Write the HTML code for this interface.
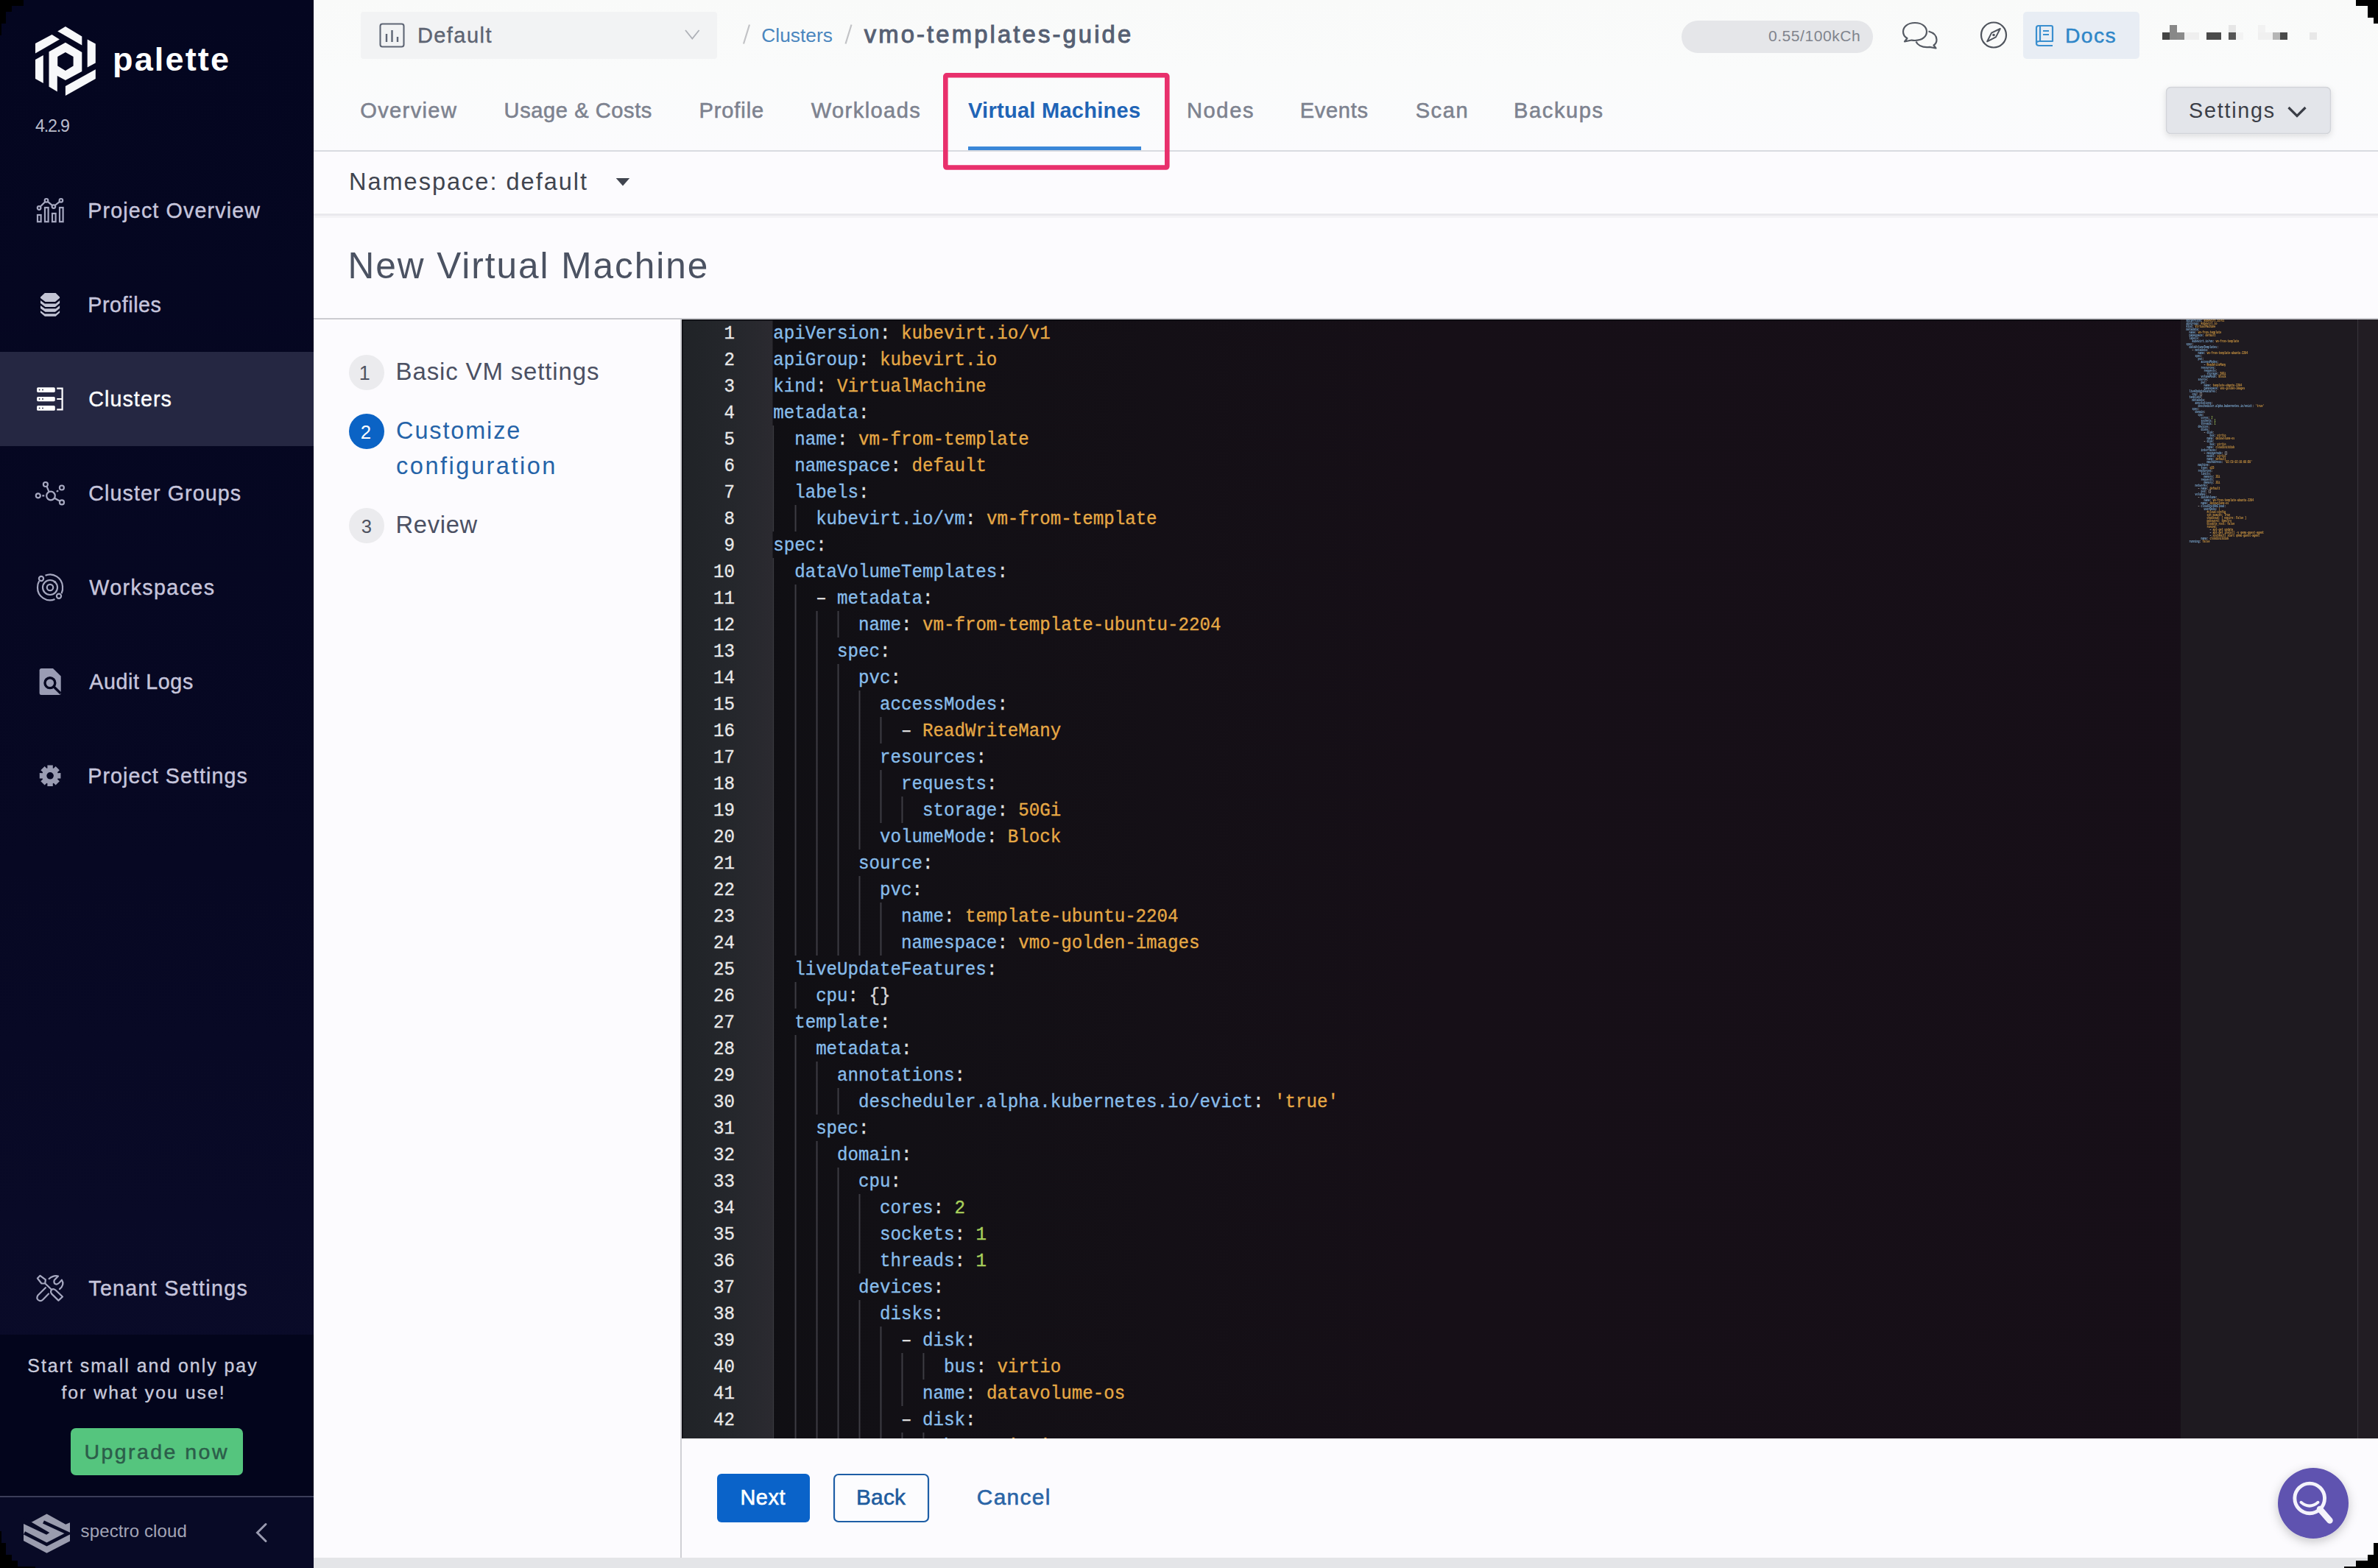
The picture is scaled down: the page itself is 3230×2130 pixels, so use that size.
<!DOCTYPE html>
<html><head><meta charset="utf-8"><title>New Virtual Machine</title>
<style>
html,body{margin:0;padding:0;width:3230px;height:2130px;overflow:hidden;background:#000;}
#page{position:absolute;left:0;top:0;width:3230px;height:2130px;overflow:hidden;}
svg{display:block;}

</style></head>
<body><div id="page">
<svg width="3230" height="2130" viewBox="0 0 3230 2130">
<defs>
<linearGradient id="sbg" x1="0" y1="0" x2="0" y2="1">
 <stop offset="0" stop-color="#040620"/><stop offset="0.55" stop-color="#070823"/><stop offset="1" stop-color="#0b0c2b"/>
</linearGradient>
<linearGradient id="gut" x1="0" y1="0" x2="1" y2="0">
 <stop offset="0" stop-color="#202327"/><stop offset="0.6" stop-color="#25272c"/><stop offset="1" stop-color="#2b2a30"/>
</linearGradient>
<linearGradient id="codebg" x1="0" y1="0" x2="1" y2="0">
 <stop offset="0" stop-color="#0e0e12"/><stop offset="0.12" stop-color="#121015"/><stop offset="0.45" stop-color="#160f17"/><stop offset="1" stop-color="#170f18"/>
</linearGradient>
<linearGradient id="hdr" x1="0" y1="0" x2="0" y2="1"><stop offset="0" stop-color="#f9faf9"/><stop offset="0.45" stop-color="#fafbfb"/><stop offset="1" stop-color="#fbfbfd"/></linearGradient>
<filter id="sh" x="-20%" y="-20%" width="140%" height="160%"><feDropShadow dx="0" dy="3" stdDeviation="4" flood-color="#000" flood-opacity="0.12"/></filter>
<filter id="sh2" x="-30%" y="-30%" width="160%" height="160%"><feDropShadow dx="0" dy="4" stdDeviation="7" flood-color="#000" flood-opacity="0.22"/></filter>
</defs>
<rect x="426" y="0" width="2804" height="2130" fill="#fcfbfe"/>
<rect x="426" y="0" width="2804" height="204" fill="url(#hdr)"/>
<rect x="426" y="204" width="2804" height="2" fill="#d9dbe0"/>
<rect x="426" y="289" width="2804" height="1" fill="#ffffff"/>
<rect x="426" y="290" width="2804" height="3" fill="#eae9ed"/>
<rect x="426" y="293" width="2804" height="3" fill="#f4f3f6"/>
<rect x="426" y="432" width="2804" height="2" fill="#cbcbd0"/>
<rect x="924" y="434" width="2" height="1682" fill="#d0d0d5"/>
<rect x="426" y="2116" width="2804" height="14" fill="#e4e5e8"/>
<rect x="0" y="0" width="426" height="2130" fill="url(#sbg)"/>
<rect x="0" y="478" width="426" height="128" fill="#252742"/>
<rect x="0" y="1813" width="426" height="220" fill="#03051c"/>
<rect x="0" y="2032" width="426" height="2" fill="#3b3d58"/>
<rect x="0" y="2034" width="426" height="96" fill="#080a26"/>
<rect x="96" y="1940" width="234" height="64" rx="7" fill="#55c57e"/>
<g fill="#f7f8fa">
<polygon points="78.2,42.4 88.9,36 111.3,49.4 111.3,61.5"/>
<polygon points="118.7,53.4 129.8,59.5 129.8,85.6 118.7,91.6"/>
<polygon points="88.9,117.1 129.8,94.3 129.8,107 88.9,130.1"/>
<polygon points="48,59.1 70.5,47.1 80.9,53.4 48,72.5"/>
<polygon points="48,80.9 58.8,74.9 58.8,113 48,107"/>
<path fill-rule="evenodd" d="M66.5,70.2 L88.9,57.8 L111.3,70.9 L111.3,97 L88.9,109 L77.8,103 L77.8,124.4 L66.5,117.7 Z M78.2,76.9 L88.9,70.9 L99.6,76.9 L99.6,89.6 L88.9,96 L78.2,89.6 Z"/>
</g>
<g transform="translate(44,260)" fill="none" stroke="#a6a8c0" stroke-width="2.2">
<rect x="7" y="32" width="4.6" height="9.2"/><rect x="17" y="22" width="4.6" height="19.2"/><rect x="27" y="30" width="4.6" height="11.2"/><rect x="37" y="22" width="4.6" height="19.2"/>
<circle cx="9.1" cy="22.5" r="2.3"/><circle cx="19" cy="12.3" r="2.3"/><circle cx="28.9" cy="20.6" r="2.3"/><circle cx="38.9" cy="12.3" r="2.3"/>
<path d="M10.7,20.8 L17.4,14 M20.8,13.8 L27.1,19.1 M30.7,19 L37.1,13.8"/>
</g>
<g transform="translate(44,388)">
<polygon points="11,15.6 16.9,9.9 31.6,9.9 37.1,15.6 37.1,36.7 31.6,41.8 16.9,41.8 11,36.7" fill="#c2c4d4"/>
<g fill="none" stroke="#060822" stroke-width="2.4">
<path d="M10,17.8 L17.2,23.2 L31.4,23.2 L38,17.8"/><path d="M10,24.8 L17.2,30.1 L31.4,30.1 L38,24.8"/><path d="M10,31.8 L17.2,37 L31.4,37 L38,31.8"/>
</g></g>
<g transform="translate(44,516)">
<rect x="6.1" y="10.2" width="24.7" height="6.7" rx="1.6" fill="#fff"/><rect x="6.1" y="23" width="24.7" height="6.2" rx="1.6" fill="#fff"/><rect x="6.1" y="35.1" width="24.7" height="6.7" rx="1.6" fill="#fff"/>
<g fill="#252742"><circle cx="9.6" cy="13.5" r="0.9"/><circle cx="14" cy="13.5" r="0.9"/><circle cx="9.6" cy="26" r="0.9"/><circle cx="14" cy="26" r="0.9"/><circle cx="9.6" cy="38.4" r="0.9"/><circle cx="14" cy="38.4" r="0.9"/></g>
<path d="M33.2,11.6 L40.6,11.6 L40.6,40.4 L33.2,40.4 M33.2,26 L40.6,26" fill="none" stroke="#fff" stroke-width="2.2"/>
</g>
<g transform="translate(44,644)" fill="none" stroke="#a6a8c0" stroke-width="2.2">
<circle cx="25" cy="29.5" r="5.8"/><circle cx="17.9" cy="14" r="3"/><circle cx="39.9" cy="18.5" r="3"/><circle cx="7.8" cy="29.3" r="3"/><circle cx="40" cy="38.4" r="3"/>
<path d="M19.6,16.8 L22.4,23.8 M32.8,23.9 L35.2,22.3 M13.3,29.4 L16.3,29.4 M30.2,32.7 L37.3,36.8"/>
</g>
<g transform="translate(44,772)" fill="none" stroke="#a6a8c0" stroke-width="2.2">
<circle cx="24" cy="26" r="4.2"/><circle cx="24" cy="26" r="10"/><circle cx="12" cy="14" r="3.1"/><circle cx="36" cy="37.8" r="3.1"/>
<path d="M17.5,9.8 A17,17 0 0 1 41,24.5 A17,17 0 0 1 39.5,34.2 M30.5,42 A17,17 0 0 1 7,26 A17,17 0 0 1 9.2,17.2"/>
<circle cx="30.6" cy="18.5" r="1.6" fill="#a6a8c0" stroke="none"/>
</g>
<g transform="translate(44,900)">
<path d="M12,8 L28,8 L38.7,18.5 L38.7,41.5 Q38.7,44 36.2,44 L12,44 Q9.6,44 9.6,41.5 L9.6,10.5 Q9.6,8 12,8 Z" fill="#9a9cb4"/>
<circle cx="23.9" cy="27.7" r="6.9" fill="none" stroke="#070822" stroke-width="3.4"/>
<path d="M29,32.8 L38.5,42" stroke="#070822" stroke-width="3.4"/>
</g>
<g transform="translate(44,1028)"><path fill-rule="evenodd" fill="#9a9cb2" d="M34.47,22.13 L38.42,22.07 L38.42,29.53 L34.47,29.47 L34.03,30.54 L36.87,33.29 L31.59,38.57 L28.84,35.73 L27.77,36.17 L27.83,40.12 L20.37,40.12 L20.43,36.17 L19.36,35.73 L16.61,38.57 L11.33,33.29 L14.17,30.54 L13.73,29.47 L9.78,29.53 L9.78,22.07 L13.73,22.13 L14.17,21.06 L11.33,18.31 L16.61,13.03 L19.36,15.87 L20.43,15.43 L20.37,11.48 L27.83,11.48 L27.77,15.43 L28.84,15.87 L31.59,13.03 L36.87,18.31 L34.03,21.06 Z M28.9,25.8 A4.8,4.8 0 1 0 19.3,25.8 A4.8,4.8 0 1 0 28.9,25.8 Z"/></g>
<g transform="translate(44,1725)" fill="none" stroke="#a6a8c0" stroke-width="2.2" stroke-linejoin="round" stroke-linecap="round">
<path d="M10.5,7.8 L6.9,11.5 L12.4,18.5 L17.2,18.5 L17.9,13.4 Z M17.6,18.8 L26,26.8"/>
<path d="M26,26.8 Q24,29.5 26.2,32.6 L35.4,41.6 L41,36.5 L31.5,27.5 Q28.5,25 26,26.8 Z"/>
<path d="M22.6,12.1 Q29,7 35,8.6 L29.7,14 Q28.5,18.5 32,19.5 Q35,20 39.9,13.6 Q44,20 37,26.1"/>
<path d="M17.9,24.2 L7.3,34.8 Q5,38.5 8,41 Q11.2,43.5 14.5,40.2 L22,32.5"/>
</g>
<g transform="translate(25,2050)">
<polygon points="38.5,6.6 64.2,20.7 70,18.2 70,43.5 38.5,59.7 7,43.1 7,18.2 17.8,17.8" fill="#9a9cae"/>
<polygon points="6,12 17.8,17.8 42.3,31.9 38.1,34.8 6,19.5" fill="#080a26"/>
<path d="M34,17.5 L67.5,33 L38.5,48 L8,32.4" stroke="#080a26" stroke-width="4.6" fill="none" stroke-linejoin="miter"/>
</g>
<path d="M361,2070.5 L349.5,2082 L361,2093.5" fill="none" stroke="#9a9bb0" stroke-width="3" stroke-linecap="round"/>
<rect x="490" y="16" width="484" height="64" rx="4" fill="#f2f3f4"/>
<rect x="516.5" y="32.5" width="32" height="31" rx="3" fill="none" stroke="#5f6675" stroke-width="2.1"/>
<path d="M525,46 V57 M532.5,41 V57 M540,50 V57" stroke="#5f6675" stroke-width="2.4"/>
<path d="M931,41 L940.3,52.5 L949.6,41" fill="none" stroke="#aeb1b7" stroke-width="1.8"/>
<path d="M1018,33.5 L1010,59.5 M1156.5,33.5 L1148.5,59.5" stroke="#c2c3c6" stroke-width="2.2"/>
<rect x="2284" y="28" width="260" height="44" rx="22" fill="#e5e6e9"/>
<g fill="none" stroke="#555a63" stroke-width="2.2" stroke-linejoin="round">
<path d="M2601,31 C2591,31 2585,36.5 2585,43 C2585,47 2587,50 2590.5,52 L2587,56.5 L2596.5,54.5 C2598,55 2599.5,55 2601,55 C2611,55 2617,49.5 2617,43 C2617,36.5 2611,31 2601,31 Z"/>
<path d="M2619.5,42.5 C2626.5,44.5 2630.5,49 2630.5,54 C2630.5,57 2629,59.8 2626.5,61.5 L2629.5,65.5 L2621,63.8 C2619.8,64 2618.6,64.2 2617.2,64.2 C2610.2,64.2 2604.5,61 2602.5,56.5"/>
</g>
<g fill="none" stroke="#4f545d" stroke-width="2.2">
<circle cx="2708" cy="47.5" r="17"/>
<path d="M2716.8,39 L2710.9,50.4 L2699.2,56.3 L2705.1,44.6 Z" stroke-linejoin="round" stroke-width="2"/>
</g><circle cx="2708" cy="47.5" r="1.8" fill="#4f545d"/>
<rect x="2748" y="16" width="158" height="64" rx="5" fill="#e8edf4"/>
<g fill="none" stroke="#3a8fcf" stroke-width="2.2" stroke-linejoin="round">
<path d="M2766,38 Q2766,35 2769,35 L2786,35 Q2788,35 2788,37 L2788,56 L2770,56 Q2766,56 2766,59 Q2766,62 2770,62 L2788,62 M2766,59 L2766,38 M2771,35.5 L2771,56"/>
<path d="M2775,42 H2783 M2775,47 H2783" stroke-width="2"/>
</g>
<rect x="2947" y="34" width="10" height="10" fill="#888888"/>
<rect x="3027" y="34" width="10" height="10" fill="#e6e6e6"/>
<rect x="3067" y="34" width="10" height="10" fill="#f2f2f2"/>
<rect x="2937" y="44" width="10" height="10" fill="#444444"/>
<rect x="2947" y="44" width="10" height="10" fill="#888888"/>
<rect x="2957" y="44" width="10" height="10" fill="#8a8a8a"/>
<rect x="2967" y="44" width="20" height="10" fill="#efefef"/>
<rect x="2997" y="44" width="20" height="10" fill="#4a4a4a"/>
<rect x="3027" y="44" width="10" height="10" fill="#555555"/>
<rect x="3037" y="44" width="10" height="10" fill="#f3f3f3"/>
<rect x="3067" y="44" width="20" height="10" fill="#f0f0f0"/>
<rect x="3087" y="44" width="10" height="10" fill="#b5b5b5"/>
<rect x="3097" y="44" width="10" height="10" fill="#4a4a4a"/>
<rect x="3137" y="44" width="10" height="10" fill="#e8e8e8"/>
<rect x="2942.5" y="118.5" width="223" height="63" rx="6" fill="#e3e5ea" stroke="#d2d4d9" stroke-width="1.5" filter="url(#sh)"/>
<path d="M3108.5,146 L3120,157.5 L3131.5,146" fill="none" stroke="#3b3e47" stroke-width="3.2"/>
<rect x="1315" y="199" width="235" height="5" fill="#3a87d8"/>
<rect x="1284.3" y="102.3" width="301" height="125.2" rx="1.5" fill="none" stroke="#e8306c" stroke-width="6.6"/>
<path d="M836.7,242 L855.2,242 L846,252.4 Z" fill="#40444f"/>
<circle cx="498" cy="506" r="24" fill="#ebebee"/>
<circle cx="498" cy="586" r="24" fill="#0b63c5"/>
<circle cx="498" cy="714" r="24" fill="#ebebee"/>
<rect x="974" y="2002" width="126" height="66" rx="6" fill="#0a63c9"/>
<rect x="1133" y="2003" width="128" height="64" rx="6" fill="#fcfcfe" stroke="#1e5ea6" stroke-width="2.2"/>
<circle cx="3142" cy="2042" r="48" fill="#5f52b0" filter="url(#sh2)"/>
<g fill="none" stroke="#f4f3fb" stroke-linecap="round"><circle cx="3137.2" cy="2035.4" r="20.3" stroke-width="4.9"/>
<path d="M3125.5,2040.8 Q3137,2050.5 3148.5,2040.8" stroke-width="4"/><path d="M3151,2050 L3164.5,2065.5" stroke-width="8.5"/></g>
<svg x="926" y="434" width="2304" height="1520" overflow="hidden">
<rect x="0" y="0" width="2304" height="1520" fill="url(#codebg)"/>
<rect x="0" y="0" width="123.5" height="1520" fill="url(#gut)"/>
<rect x="0" y="0" width="2304" height="1.5" fill="#0b0b10"/><rect x="0" y="0" width="1.5" height="1520" fill="#0b0b10"/>
<rect x="2036" y="0" width="240" height="1520" fill="#1e1a20"/>
<rect x="2276" y="0" width="1.5" height="1520" fill="#38353b"/>
<rect x="2277.5" y="0" width="26.5" height="1520" fill="#221d23"/>
<rect x="123.5" y="144" width="1.6" height="144" fill="#3a3a40"/>
<rect x="123.5" y="324" width="1.6" height="1260" fill="#3a3a40"/>
<rect x="153.57" y="252" width="2" height="36" fill="#3d3c43"/>
<rect x="153.57" y="360" width="2" height="504" fill="#3d3c43"/>
<rect x="153.57" y="900" width="2" height="36" fill="#3d3c43"/>
<rect x="153.57" y="972" width="2" height="612" fill="#3d3c43"/>
<rect x="182.54" y="396" width="2" height="468" fill="#3d3c43"/>
<rect x="182.54" y="1008" width="2" height="72" fill="#3d3c43"/>
<rect x="182.54" y="1116" width="2" height="468" fill="#3d3c43"/>
<rect x="211.52" y="396" width="2" height="36" fill="#3d3c43"/>
<rect x="211.52" y="468" width="2" height="396" fill="#3d3c43"/>
<rect x="211.52" y="1044" width="2" height="36" fill="#3d3c43"/>
<rect x="211.52" y="1152" width="2" height="432" fill="#3d3c43"/>
<rect x="240.49" y="504" width="2" height="216" fill="#3d3c43"/>
<rect x="240.49" y="756" width="2" height="108" fill="#3d3c43"/>
<rect x="240.49" y="1188" width="2" height="108" fill="#3d3c43"/>
<rect x="240.49" y="1332" width="2" height="252" fill="#3d3c43"/>
<rect x="269.46" y="540" width="2" height="36" fill="#3d3c43"/>
<rect x="269.46" y="612" width="2" height="72" fill="#3d3c43"/>
<rect x="269.46" y="792" width="2" height="72" fill="#3d3c43"/>
<rect x="269.46" y="1368" width="2" height="216" fill="#3d3c43"/>
<rect x="298.43" y="648" width="2" height="36" fill="#3d3c43"/>
<rect x="298.43" y="1404" width="2" height="72" fill="#3d3c43"/>
<rect x="298.43" y="1512" width="2" height="72" fill="#3d3c43"/>
<rect x="327.40" y="1404" width="2" height="36" fill="#3d3c43"/>
<rect x="327.40" y="1512" width="2" height="36" fill="#3d3c43"/>
<g font-family="&quot;Liberation Mono&quot;, monospace" font-size="26.3" fill="#e8e8e8" stroke="#e8e8e8" stroke-width="0.35" text-anchor="end">
<text x="0" y="0" transform="translate(72.0,25.90) scale(0.9178,1)">1</text>
<text x="0" y="0" transform="translate(72.0,61.90) scale(0.9178,1)">2</text>
<text x="0" y="0" transform="translate(72.0,97.90) scale(0.9178,1)">3</text>
<text x="0" y="0" transform="translate(72.0,133.90) scale(0.9178,1)">4</text>
<text x="0" y="0" transform="translate(72.0,169.90) scale(0.9178,1)">5</text>
<text x="0" y="0" transform="translate(72.0,205.90) scale(0.9178,1)">6</text>
<text x="0" y="0" transform="translate(72.0,241.90) scale(0.9178,1)">7</text>
<text x="0" y="0" transform="translate(72.0,277.90) scale(0.9178,1)">8</text>
<text x="0" y="0" transform="translate(72.0,313.90) scale(0.9178,1)">9</text>
<text x="0" y="0" transform="translate(72.0,349.90) scale(0.9178,1)">10</text>
<text x="0" y="0" transform="translate(72.0,385.90) scale(0.9178,1)">11</text>
<text x="0" y="0" transform="translate(72.0,421.90) scale(0.9178,1)">12</text>
<text x="0" y="0" transform="translate(72.0,457.90) scale(0.9178,1)">13</text>
<text x="0" y="0" transform="translate(72.0,493.90) scale(0.9178,1)">14</text>
<text x="0" y="0" transform="translate(72.0,529.90) scale(0.9178,1)">15</text>
<text x="0" y="0" transform="translate(72.0,565.90) scale(0.9178,1)">16</text>
<text x="0" y="0" transform="translate(72.0,601.90) scale(0.9178,1)">17</text>
<text x="0" y="0" transform="translate(72.0,637.90) scale(0.9178,1)">18</text>
<text x="0" y="0" transform="translate(72.0,673.90) scale(0.9178,1)">19</text>
<text x="0" y="0" transform="translate(72.0,709.90) scale(0.9178,1)">20</text>
<text x="0" y="0" transform="translate(72.0,745.90) scale(0.9178,1)">21</text>
<text x="0" y="0" transform="translate(72.0,781.90) scale(0.9178,1)">22</text>
<text x="0" y="0" transform="translate(72.0,817.90) scale(0.9178,1)">23</text>
<text x="0" y="0" transform="translate(72.0,853.90) scale(0.9178,1)">24</text>
<text x="0" y="0" transform="translate(72.0,889.90) scale(0.9178,1)">25</text>
<text x="0" y="0" transform="translate(72.0,925.90) scale(0.9178,1)">26</text>
<text x="0" y="0" transform="translate(72.0,961.90) scale(0.9178,1)">27</text>
<text x="0" y="0" transform="translate(72.0,997.90) scale(0.9178,1)">28</text>
<text x="0" y="0" transform="translate(72.0,1033.90) scale(0.9178,1)">29</text>
<text x="0" y="0" transform="translate(72.0,1069.90) scale(0.9178,1)">30</text>
<text x="0" y="0" transform="translate(72.0,1105.90) scale(0.9178,1)">31</text>
<text x="0" y="0" transform="translate(72.0,1141.90) scale(0.9178,1)">32</text>
<text x="0" y="0" transform="translate(72.0,1177.90) scale(0.9178,1)">33</text>
<text x="0" y="0" transform="translate(72.0,1213.90) scale(0.9178,1)">34</text>
<text x="0" y="0" transform="translate(72.0,1249.90) scale(0.9178,1)">35</text>
<text x="0" y="0" transform="translate(72.0,1285.90) scale(0.9178,1)">36</text>
<text x="0" y="0" transform="translate(72.0,1321.90) scale(0.9178,1)">37</text>
<text x="0" y="0" transform="translate(72.0,1357.90) scale(0.9178,1)">38</text>
<text x="0" y="0" transform="translate(72.0,1393.90) scale(0.9178,1)">39</text>
<text x="0" y="0" transform="translate(72.0,1429.90) scale(0.9178,1)">40</text>
<text x="0" y="0" transform="translate(72.0,1465.90) scale(0.9178,1)">41</text>
<text x="0" y="0" transform="translate(72.0,1501.90) scale(0.9178,1)">42</text>
<text x="0" y="0" transform="translate(72.0,1537.90) scale(0.9178,1)">43</text>
<text x="0" y="0" transform="translate(72.0,1573.90) scale(0.9178,1)">44</text>
</g>
<g font-family="&quot;Liberation Mono&quot;, monospace" font-size="26.3" xml:space="preserve">
<text transform="translate(124.20000000000005,25.90) scale(0.9178,1)"><tspan x="0.00" fill="#88bdea" stroke="#88bdea" stroke-width="0.35">apiVersion</tspan><tspan x="157.83" fill="#e2e2e2" stroke="#e2e2e2" stroke-width="0.35">:</tspan><tspan x="189.39" fill="#e6a845" stroke="#e6a845" stroke-width="0.35">kubevirt.io/v1</tspan></text>
<text transform="translate(124.20000000000005,61.90) scale(0.9178,1)"><tspan x="0.00" fill="#88bdea" stroke="#88bdea" stroke-width="0.35">apiGroup</tspan><tspan x="126.26" fill="#e2e2e2" stroke="#e2e2e2" stroke-width="0.35">:</tspan><tspan x="157.83" fill="#e6a845" stroke="#e6a845" stroke-width="0.35">kubevirt.io</tspan></text>
<text transform="translate(124.20000000000005,97.90) scale(0.9178,1)"><tspan x="0.00" fill="#88bdea" stroke="#88bdea" stroke-width="0.35">kind</tspan><tspan x="63.13" fill="#e2e2e2" stroke="#e2e2e2" stroke-width="0.35">:</tspan><tspan x="94.70" fill="#e6a845" stroke="#e6a845" stroke-width="0.35">VirtualMachine</tspan></text>
<text transform="translate(124.20000000000005,133.90) scale(0.9178,1)"><tspan x="0.00" fill="#88bdea" stroke="#88bdea" stroke-width="0.35">metadata</tspan><tspan x="126.26" fill="#e2e2e2" stroke="#e2e2e2" stroke-width="0.35">:</tspan></text>
<text transform="translate(124.20000000000005,169.90) scale(0.9178,1)"><tspan x="31.57" fill="#88bdea" stroke="#88bdea" stroke-width="0.35">name</tspan><tspan x="94.70" fill="#e2e2e2" stroke="#e2e2e2" stroke-width="0.35">:</tspan><tspan x="126.26" fill="#e6a845" stroke="#e6a845" stroke-width="0.35">vm-from-template</tspan></text>
<text transform="translate(124.20000000000005,205.90) scale(0.9178,1)"><tspan x="31.57" fill="#88bdea" stroke="#88bdea" stroke-width="0.35">namespace</tspan><tspan x="173.61" fill="#e2e2e2" stroke="#e2e2e2" stroke-width="0.35">:</tspan><tspan x="205.17" fill="#e6a845" stroke="#e6a845" stroke-width="0.35">default</tspan></text>
<text transform="translate(124.20000000000005,241.90) scale(0.9178,1)"><tspan x="31.57" fill="#88bdea" stroke="#88bdea" stroke-width="0.35">labels</tspan><tspan x="126.26" fill="#e2e2e2" stroke="#e2e2e2" stroke-width="0.35">:</tspan></text>
<text transform="translate(124.20000000000005,277.90) scale(0.9178,1)"><tspan x="63.13" fill="#88bdea" stroke="#88bdea" stroke-width="0.35">kubevirt.io/vm</tspan><tspan x="284.09" fill="#e2e2e2" stroke="#e2e2e2" stroke-width="0.35">:</tspan><tspan x="315.65" fill="#e6a845" stroke="#e6a845" stroke-width="0.35">vm-from-template</tspan></text>
<text transform="translate(124.20000000000005,313.90) scale(0.9178,1)"><tspan x="0.00" fill="#88bdea" stroke="#88bdea" stroke-width="0.35">spec</tspan><tspan x="63.13" fill="#e2e2e2" stroke="#e2e2e2" stroke-width="0.35">:</tspan></text>
<text transform="translate(124.20000000000005,349.90) scale(0.9178,1)"><tspan x="31.57" fill="#88bdea" stroke="#88bdea" stroke-width="0.35">dataVolumeTemplates</tspan><tspan x="331.43" fill="#e2e2e2" stroke="#e2e2e2" stroke-width="0.35">:</tspan></text>
<text transform="translate(124.20000000000005,385.90) scale(0.9178,1)"><tspan x="63.13" fill="#e2e2e2" stroke="#e2e2e2" stroke-width="0.35">–</tspan><tspan x="94.70" fill="#88bdea" stroke="#88bdea" stroke-width="0.35">metadata</tspan><tspan x="220.96" fill="#e2e2e2" stroke="#e2e2e2" stroke-width="0.35">:</tspan></text>
<text transform="translate(124.20000000000005,421.90) scale(0.9178,1)"><tspan x="126.26" fill="#88bdea" stroke="#88bdea" stroke-width="0.35">name</tspan><tspan x="189.39" fill="#e2e2e2" stroke="#e2e2e2" stroke-width="0.35">:</tspan><tspan x="220.96" fill="#e6a845" stroke="#e6a845" stroke-width="0.35">vm-from-template-ubuntu-2204</tspan></text>
<text transform="translate(124.20000000000005,457.90) scale(0.9178,1)"><tspan x="94.70" fill="#88bdea" stroke="#88bdea" stroke-width="0.35">spec</tspan><tspan x="157.83" fill="#e2e2e2" stroke="#e2e2e2" stroke-width="0.35">:</tspan></text>
<text transform="translate(124.20000000000005,493.90) scale(0.9178,1)"><tspan x="126.26" fill="#88bdea" stroke="#88bdea" stroke-width="0.35">pvc</tspan><tspan x="173.61" fill="#e2e2e2" stroke="#e2e2e2" stroke-width="0.35">:</tspan></text>
<text transform="translate(124.20000000000005,529.90) scale(0.9178,1)"><tspan x="157.83" fill="#88bdea" stroke="#88bdea" stroke-width="0.35">accessModes</tspan><tspan x="331.43" fill="#e2e2e2" stroke="#e2e2e2" stroke-width="0.35">:</tspan></text>
<text transform="translate(124.20000000000005,565.90) scale(0.9178,1)"><tspan x="189.39" fill="#e2e2e2" stroke="#e2e2e2" stroke-width="0.35">–</tspan><tspan x="220.96" fill="#e6a845" stroke="#e6a845" stroke-width="0.35">ReadWriteMany</tspan></text>
<text transform="translate(124.20000000000005,601.90) scale(0.9178,1)"><tspan x="157.83" fill="#88bdea" stroke="#88bdea" stroke-width="0.35">resources</tspan><tspan x="299.87" fill="#e2e2e2" stroke="#e2e2e2" stroke-width="0.35">:</tspan></text>
<text transform="translate(124.20000000000005,637.90) scale(0.9178,1)"><tspan x="189.39" fill="#88bdea" stroke="#88bdea" stroke-width="0.35">requests</tspan><tspan x="315.65" fill="#e2e2e2" stroke="#e2e2e2" stroke-width="0.35">:</tspan></text>
<text transform="translate(124.20000000000005,673.90) scale(0.9178,1)"><tspan x="220.96" fill="#88bdea" stroke="#88bdea" stroke-width="0.35">storage</tspan><tspan x="331.43" fill="#e2e2e2" stroke="#e2e2e2" stroke-width="0.35">:</tspan><tspan x="363.00" fill="#e6a845" stroke="#e6a845" stroke-width="0.35">50Gi</tspan></text>
<text transform="translate(124.20000000000005,709.90) scale(0.9178,1)"><tspan x="157.83" fill="#88bdea" stroke="#88bdea" stroke-width="0.35">volumeMode</tspan><tspan x="315.65" fill="#e2e2e2" stroke="#e2e2e2" stroke-width="0.35">:</tspan><tspan x="347.22" fill="#e6a845" stroke="#e6a845" stroke-width="0.35">Block</tspan></text>
<text transform="translate(124.20000000000005,745.90) scale(0.9178,1)"><tspan x="126.26" fill="#88bdea" stroke="#88bdea" stroke-width="0.35">source</tspan><tspan x="220.96" fill="#e2e2e2" stroke="#e2e2e2" stroke-width="0.35">:</tspan></text>
<text transform="translate(124.20000000000005,781.90) scale(0.9178,1)"><tspan x="157.83" fill="#88bdea" stroke="#88bdea" stroke-width="0.35">pvc</tspan><tspan x="205.17" fill="#e2e2e2" stroke="#e2e2e2" stroke-width="0.35">:</tspan></text>
<text transform="translate(124.20000000000005,817.90) scale(0.9178,1)"><tspan x="189.39" fill="#88bdea" stroke="#88bdea" stroke-width="0.35">name</tspan><tspan x="252.52" fill="#e2e2e2" stroke="#e2e2e2" stroke-width="0.35">:</tspan><tspan x="284.09" fill="#e6a845" stroke="#e6a845" stroke-width="0.35">template-ubuntu-2204</tspan></text>
<text transform="translate(124.20000000000005,853.90) scale(0.9178,1)"><tspan x="189.39" fill="#88bdea" stroke="#88bdea" stroke-width="0.35">namespace</tspan><tspan x="331.43" fill="#e2e2e2" stroke="#e2e2e2" stroke-width="0.35">:</tspan><tspan x="363.00" fill="#e6a845" stroke="#e6a845" stroke-width="0.35">vmo-golden-images</tspan></text>
<text transform="translate(124.20000000000005,889.90) scale(0.9178,1)"><tspan x="31.57" fill="#88bdea" stroke="#88bdea" stroke-width="0.35">liveUpdateFeatures</tspan><tspan x="315.65" fill="#e2e2e2" stroke="#e2e2e2" stroke-width="0.35">:</tspan></text>
<text transform="translate(124.20000000000005,925.90) scale(0.9178,1)"><tspan x="63.13" fill="#88bdea" stroke="#88bdea" stroke-width="0.35">cpu</tspan><tspan x="110.48" fill="#e2e2e2" stroke="#e2e2e2" stroke-width="0.35">:</tspan><tspan x="142.04" fill="#d8d8d8" stroke="#d8d8d8" stroke-width="0.35">{}</tspan></text>
<text transform="translate(124.20000000000005,961.90) scale(0.9178,1)"><tspan x="31.57" fill="#88bdea" stroke="#88bdea" stroke-width="0.35">template</tspan><tspan x="157.83" fill="#e2e2e2" stroke="#e2e2e2" stroke-width="0.35">:</tspan></text>
<text transform="translate(124.20000000000005,997.90) scale(0.9178,1)"><tspan x="63.13" fill="#88bdea" stroke="#88bdea" stroke-width="0.35">metadata</tspan><tspan x="189.39" fill="#e2e2e2" stroke="#e2e2e2" stroke-width="0.35">:</tspan></text>
<text transform="translate(124.20000000000005,1033.90) scale(0.9178,1)"><tspan x="94.70" fill="#88bdea" stroke="#88bdea" stroke-width="0.35">annotations</tspan><tspan x="268.30" fill="#e2e2e2" stroke="#e2e2e2" stroke-width="0.35">:</tspan></text>
<text transform="translate(124.20000000000005,1069.90) scale(0.9178,1)"><tspan x="126.26" fill="#88bdea" stroke="#88bdea" stroke-width="0.35">descheduler.alpha.kubernetes.io/evict</tspan><tspan x="710.22" fill="#e2e2e2" stroke="#e2e2e2" stroke-width="0.35">:</tspan><tspan x="741.78" fill="#e6a845" stroke="#e6a845" stroke-width="0.35">'true'</tspan></text>
<text transform="translate(124.20000000000005,1105.90) scale(0.9178,1)"><tspan x="63.13" fill="#88bdea" stroke="#88bdea" stroke-width="0.35">spec</tspan><tspan x="126.26" fill="#e2e2e2" stroke="#e2e2e2" stroke-width="0.35">:</tspan></text>
<text transform="translate(124.20000000000005,1141.90) scale(0.9178,1)"><tspan x="94.70" fill="#88bdea" stroke="#88bdea" stroke-width="0.35">domain</tspan><tspan x="189.39" fill="#e2e2e2" stroke="#e2e2e2" stroke-width="0.35">:</tspan></text>
<text transform="translate(124.20000000000005,1177.90) scale(0.9178,1)"><tspan x="126.26" fill="#88bdea" stroke="#88bdea" stroke-width="0.35">cpu</tspan><tspan x="173.61" fill="#e2e2e2" stroke="#e2e2e2" stroke-width="0.35">:</tspan></text>
<text transform="translate(124.20000000000005,1213.90) scale(0.9178,1)"><tspan x="157.83" fill="#88bdea" stroke="#88bdea" stroke-width="0.35">cores</tspan><tspan x="236.74" fill="#e2e2e2" stroke="#e2e2e2" stroke-width="0.35">:</tspan><tspan x="268.30" fill="#a9d15c" stroke="#a9d15c" stroke-width="0.35">2</tspan></text>
<text transform="translate(124.20000000000005,1249.90) scale(0.9178,1)"><tspan x="157.83" fill="#88bdea" stroke="#88bdea" stroke-width="0.35">sockets</tspan><tspan x="268.30" fill="#e2e2e2" stroke="#e2e2e2" stroke-width="0.35">:</tspan><tspan x="299.87" fill="#a9d15c" stroke="#a9d15c" stroke-width="0.35">1</tspan></text>
<text transform="translate(124.20000000000005,1285.90) scale(0.9178,1)"><tspan x="157.83" fill="#88bdea" stroke="#88bdea" stroke-width="0.35">threads</tspan><tspan x="268.30" fill="#e2e2e2" stroke="#e2e2e2" stroke-width="0.35">:</tspan><tspan x="299.87" fill="#a9d15c" stroke="#a9d15c" stroke-width="0.35">1</tspan></text>
<text transform="translate(124.20000000000005,1321.90) scale(0.9178,1)"><tspan x="126.26" fill="#88bdea" stroke="#88bdea" stroke-width="0.35">devices</tspan><tspan x="236.74" fill="#e2e2e2" stroke="#e2e2e2" stroke-width="0.35">:</tspan></text>
<text transform="translate(124.20000000000005,1357.90) scale(0.9178,1)"><tspan x="157.83" fill="#88bdea" stroke="#88bdea" stroke-width="0.35">disks</tspan><tspan x="236.74" fill="#e2e2e2" stroke="#e2e2e2" stroke-width="0.35">:</tspan></text>
<text transform="translate(124.20000000000005,1393.90) scale(0.9178,1)"><tspan x="189.39" fill="#e2e2e2" stroke="#e2e2e2" stroke-width="0.35">–</tspan><tspan x="220.96" fill="#88bdea" stroke="#88bdea" stroke-width="0.35">disk</tspan><tspan x="284.09" fill="#e2e2e2" stroke="#e2e2e2" stroke-width="0.35">:</tspan></text>
<text transform="translate(124.20000000000005,1429.90) scale(0.9178,1)"><tspan x="252.52" fill="#88bdea" stroke="#88bdea" stroke-width="0.35">bus</tspan><tspan x="299.87" fill="#e2e2e2" stroke="#e2e2e2" stroke-width="0.35">:</tspan><tspan x="331.43" fill="#e6a845" stroke="#e6a845" stroke-width="0.35">virtio</tspan></text>
<text transform="translate(124.20000000000005,1465.90) scale(0.9178,1)"><tspan x="220.96" fill="#88bdea" stroke="#88bdea" stroke-width="0.35">name</tspan><tspan x="284.09" fill="#e2e2e2" stroke="#e2e2e2" stroke-width="0.35">:</tspan><tspan x="315.65" fill="#e6a845" stroke="#e6a845" stroke-width="0.35">datavolume-os</tspan></text>
<text transform="translate(124.20000000000005,1501.90) scale(0.9178,1)"><tspan x="189.39" fill="#e2e2e2" stroke="#e2e2e2" stroke-width="0.35">–</tspan><tspan x="220.96" fill="#88bdea" stroke="#88bdea" stroke-width="0.35">disk</tspan><tspan x="284.09" fill="#e2e2e2" stroke="#e2e2e2" stroke-width="0.35">:</tspan></text>
<text transform="translate(124.20000000000005,1537.90) scale(0.9178,1)"><tspan x="252.52" fill="#88bdea" stroke="#88bdea" stroke-width="0.35">bus</tspan><tspan x="299.87" fill="#e2e2e2" stroke="#e2e2e2" stroke-width="0.35">:</tspan><tspan x="331.43" fill="#e6a845" stroke="#e6a845" stroke-width="0.35">virtio</tspan></text>
<text transform="translate(124.20000000000005,1573.90) scale(0.9178,1)"><tspan x="220.96" fill="#88bdea" stroke="#88bdea" stroke-width="0.35">name</tspan><tspan x="284.09" fill="#e2e2e2" stroke="#e2e2e2" stroke-width="0.35">:</tspan><tspan x="315.65" fill="#e6a845" stroke="#e6a845" stroke-width="0.35">cloudinitdisk</tspan></text>
</g>
<g font-family="&quot;Liberation Mono&quot;, monospace" font-size="4.5" xml:space="preserve" font-weight="700" opacity="0.9">
<text transform="translate(2043.5,3.40) scale(0.7406,1)"><tspan x="0.00" fill="#88bdea">apiVersion</tspan><tspan x="27.00" fill="#e2e2e2">:</tspan><tspan x="32.41" fill="#e6a845">kubevirt.io/v1</tspan></text>
<text transform="translate(2043.5,7.40) scale(0.7406,1)"><tspan x="0.00" fill="#88bdea">apiGroup</tspan><tspan x="21.60" fill="#e2e2e2">:</tspan><tspan x="27.00" fill="#e6a845">kubevirt.io</tspan></text>
<text transform="translate(2043.5,11.40) scale(0.7406,1)"><tspan x="0.00" fill="#88bdea">kind</tspan><tspan x="10.80" fill="#e2e2e2">:</tspan><tspan x="16.20" fill="#e6a845">VirtualMachine</tspan></text>
<text transform="translate(2043.5,15.40) scale(0.7406,1)"><tspan x="0.00" fill="#88bdea">metadata</tspan><tspan x="21.60" fill="#e2e2e2">:</tspan></text>
<text transform="translate(2043.5,19.40) scale(0.7406,1)"><tspan x="5.40" fill="#88bdea">name</tspan><tspan x="16.20" fill="#e2e2e2">:</tspan><tspan x="21.60" fill="#e6a845">vm-from-template</tspan></text>
<text transform="translate(2043.5,23.40) scale(0.7406,1)"><tspan x="5.40" fill="#88bdea">namespace</tspan><tspan x="29.70" fill="#e2e2e2">:</tspan><tspan x="35.11" fill="#e6a845">default</tspan></text>
<text transform="translate(2043.5,27.40) scale(0.7406,1)"><tspan x="5.40" fill="#88bdea">labels</tspan><tspan x="21.60" fill="#e2e2e2">:</tspan></text>
<text transform="translate(2043.5,31.40) scale(0.7406,1)"><tspan x="10.80" fill="#88bdea">kubevirt.io/vm</tspan><tspan x="48.61" fill="#e2e2e2">:</tspan><tspan x="54.01" fill="#e6a845">vm-from-template</tspan></text>
<text transform="translate(2043.5,35.40) scale(0.7406,1)"><tspan x="0.00" fill="#88bdea">spec</tspan><tspan x="10.80" fill="#e2e2e2">:</tspan></text>
<text transform="translate(2043.5,39.40) scale(0.7406,1)"><tspan x="5.40" fill="#88bdea">dataVolumeTemplates</tspan><tspan x="56.71" fill="#e2e2e2">:</tspan></text>
<text transform="translate(2043.5,43.40) scale(0.7406,1)"><tspan x="10.80" fill="#e2e2e2">–</tspan><tspan x="16.20" fill="#88bdea">metadata</tspan><tspan x="37.81" fill="#e2e2e2">:</tspan></text>
<text transform="translate(2043.5,47.40) scale(0.7406,1)"><tspan x="21.60" fill="#88bdea">name</tspan><tspan x="32.41" fill="#e2e2e2">:</tspan><tspan x="37.81" fill="#e6a845">vm-from-template-ubuntu-2204</tspan></text>
<text transform="translate(2043.5,51.40) scale(0.7406,1)"><tspan x="16.20" fill="#88bdea">spec</tspan><tspan x="27.00" fill="#e2e2e2">:</tspan></text>
<text transform="translate(2043.5,55.40) scale(0.7406,1)"><tspan x="21.60" fill="#88bdea">pvc</tspan><tspan x="29.70" fill="#e2e2e2">:</tspan></text>
<text transform="translate(2043.5,59.40) scale(0.7406,1)"><tspan x="27.00" fill="#88bdea">accessModes</tspan><tspan x="56.71" fill="#e2e2e2">:</tspan></text>
<text transform="translate(2043.5,63.40) scale(0.7406,1)"><tspan x="32.41" fill="#e2e2e2">–</tspan><tspan x="37.81" fill="#e6a845">ReadWriteMany</tspan></text>
<text transform="translate(2043.5,67.40) scale(0.7406,1)"><tspan x="27.00" fill="#88bdea">resources</tspan><tspan x="51.31" fill="#e2e2e2">:</tspan></text>
<text transform="translate(2043.5,71.40) scale(0.7406,1)"><tspan x="32.41" fill="#88bdea">requests</tspan><tspan x="54.01" fill="#e2e2e2">:</tspan></text>
<text transform="translate(2043.5,75.40) scale(0.7406,1)"><tspan x="37.81" fill="#88bdea">storage</tspan><tspan x="56.71" fill="#e2e2e2">:</tspan><tspan x="62.11" fill="#e6a845">50Gi</tspan></text>
<text transform="translate(2043.5,79.40) scale(0.7406,1)"><tspan x="27.00" fill="#88bdea">volumeMode</tspan><tspan x="54.01" fill="#e2e2e2">:</tspan><tspan x="59.41" fill="#e6a845">Block</tspan></text>
<text transform="translate(2043.5,83.40) scale(0.7406,1)"><tspan x="21.60" fill="#88bdea">source</tspan><tspan x="37.81" fill="#e2e2e2">:</tspan></text>
<text transform="translate(2043.5,87.40) scale(0.7406,1)"><tspan x="27.00" fill="#88bdea">pvc</tspan><tspan x="35.11" fill="#e2e2e2">:</tspan></text>
<text transform="translate(2043.5,91.40) scale(0.7406,1)"><tspan x="32.41" fill="#88bdea">name</tspan><tspan x="43.21" fill="#e2e2e2">:</tspan><tspan x="48.61" fill="#e6a845">template-ubuntu-2204</tspan></text>
<text transform="translate(2043.5,95.40) scale(0.7406,1)"><tspan x="32.41" fill="#88bdea">namespace</tspan><tspan x="56.71" fill="#e2e2e2">:</tspan><tspan x="62.11" fill="#e6a845">vmo-golden-images</tspan></text>
<text transform="translate(2043.5,99.40) scale(0.7406,1)"><tspan x="5.40" fill="#88bdea">liveUpdateFeatures</tspan><tspan x="54.01" fill="#e2e2e2">:</tspan></text>
<text transform="translate(2043.5,103.40) scale(0.7406,1)"><tspan x="10.80" fill="#88bdea">cpu</tspan><tspan x="18.90" fill="#e2e2e2">:</tspan><tspan x="24.30" fill="#d8d8d8">{}</tspan></text>
<text transform="translate(2043.5,107.40) scale(0.7406,1)"><tspan x="5.40" fill="#88bdea">template</tspan><tspan x="27.00" fill="#e2e2e2">:</tspan></text>
<text transform="translate(2043.5,111.40) scale(0.7406,1)"><tspan x="10.80" fill="#88bdea">metadata</tspan><tspan x="32.41" fill="#e2e2e2">:</tspan></text>
<text transform="translate(2043.5,115.40) scale(0.7406,1)"><tspan x="16.20" fill="#88bdea">annotations</tspan><tspan x="45.91" fill="#e2e2e2">:</tspan></text>
<text transform="translate(2043.5,119.40) scale(0.7406,1)"><tspan x="21.60" fill="#88bdea">descheduler.alpha.kubernetes.io/evict</tspan><tspan x="121.52" fill="#e2e2e2">:</tspan><tspan x="126.92" fill="#e6a845">'true'</tspan></text>
<text transform="translate(2043.5,123.40) scale(0.7406,1)"><tspan x="10.80" fill="#88bdea">spec</tspan><tspan x="21.60" fill="#e2e2e2">:</tspan></text>
<text transform="translate(2043.5,127.40) scale(0.7406,1)"><tspan x="16.20" fill="#88bdea">domain</tspan><tspan x="32.41" fill="#e2e2e2">:</tspan></text>
<text transform="translate(2043.5,131.40) scale(0.7406,1)"><tspan x="21.60" fill="#88bdea">cpu</tspan><tspan x="29.70" fill="#e2e2e2">:</tspan></text>
<text transform="translate(2043.5,135.40) scale(0.7406,1)"><tspan x="27.00" fill="#88bdea">cores</tspan><tspan x="40.51" fill="#e2e2e2">:</tspan><tspan x="45.91" fill="#a9d15c">2</tspan></text>
<text transform="translate(2043.5,139.40) scale(0.7406,1)"><tspan x="27.00" fill="#88bdea">sockets</tspan><tspan x="45.91" fill="#e2e2e2">:</tspan><tspan x="51.31" fill="#a9d15c">1</tspan></text>
<text transform="translate(2043.5,143.40) scale(0.7406,1)"><tspan x="27.00" fill="#88bdea">threads</tspan><tspan x="45.91" fill="#e2e2e2">:</tspan><tspan x="51.31" fill="#a9d15c">1</tspan></text>
<text transform="translate(2043.5,147.40) scale(0.7406,1)"><tspan x="21.60" fill="#88bdea">devices</tspan><tspan x="40.51" fill="#e2e2e2">:</tspan></text>
<text transform="translate(2043.5,151.40) scale(0.7406,1)"><tspan x="27.00" fill="#88bdea">disks</tspan><tspan x="40.51" fill="#e2e2e2">:</tspan></text>
<text transform="translate(2043.5,155.40) scale(0.7406,1)"><tspan x="32.41" fill="#e2e2e2">–</tspan><tspan x="37.81" fill="#88bdea">disk</tspan><tspan x="48.61" fill="#e2e2e2">:</tspan></text>
<text transform="translate(2043.5,159.40) scale(0.7406,1)"><tspan x="43.21" fill="#88bdea">bus</tspan><tspan x="51.31" fill="#e2e2e2">:</tspan><tspan x="56.71" fill="#e6a845">virtio</tspan></text>
<text transform="translate(2043.5,163.40) scale(0.7406,1)"><tspan x="37.81" fill="#88bdea">name</tspan><tspan x="48.61" fill="#e2e2e2">:</tspan><tspan x="54.01" fill="#e6a845">datavolume-os</tspan></text>
<text transform="translate(2043.5,167.40) scale(0.7406,1)"><tspan x="32.41" fill="#e2e2e2">–</tspan><tspan x="37.81" fill="#88bdea">disk</tspan><tspan x="48.61" fill="#e2e2e2">:</tspan></text>
<text transform="translate(2043.5,171.40) scale(0.7406,1)"><tspan x="43.21" fill="#88bdea">bus</tspan><tspan x="51.31" fill="#e2e2e2">:</tspan><tspan x="56.71" fill="#e6a845">virtio</tspan></text>
<text transform="translate(2043.5,175.40) scale(0.7406,1)"><tspan x="37.81" fill="#88bdea">name</tspan><tspan x="48.61" fill="#e2e2e2">:</tspan><tspan x="54.01" fill="#e6a845">cloudinitdisk</tspan></text>
<text transform="translate(2043.5,179.40) scale(0.7406,1)"><tspan x="27.00" fill="#88bdea">interfaces</tspan><tspan x="54.01" fill="#e2e2e2">:</tspan></text>
<text transform="translate(2043.5,183.40) scale(0.7406,1)"><tspan x="32.41" fill="#e2e2e2">–</tspan><tspan x="37.81" fill="#88bdea">masquerade</tspan><tspan x="64.81" fill="#e2e2e2">:</tspan><tspan x="70.21" fill="#d8d8d8">{}</tspan></text>
<text transform="translate(2043.5,187.40) scale(0.7406,1)"><tspan x="37.81" fill="#88bdea">model</tspan><tspan x="51.31" fill="#e2e2e2">:</tspan><tspan x="56.71" fill="#e6a845">virtio</tspan></text>
<text transform="translate(2043.5,191.40) scale(0.7406,1)"><tspan x="37.81" fill="#88bdea">name</tspan><tspan x="48.61" fill="#e2e2e2">:</tspan><tspan x="54.01" fill="#e6a845">default</tspan></text>
<text transform="translate(2043.5,195.40) scale(0.7406,1)"><tspan x="37.81" fill="#88bdea">macAddress</tspan><tspan x="64.81" fill="#e2e2e2">:</tspan><tspan x="70.21" fill="#e6a845">'02:C9:02:18:08:D8'</tspan></text>
<text transform="translate(2043.5,199.40) scale(0.7406,1)"><tspan x="21.60" fill="#88bdea">machine</tspan><tspan x="40.51" fill="#e2e2e2">:</tspan></text>
<text transform="translate(2043.5,203.40) scale(0.7406,1)"><tspan x="27.00" fill="#88bdea">type</tspan><tspan x="37.81" fill="#e2e2e2">:</tspan><tspan x="43.21" fill="#e6a845">q35</tspan></text>
<text transform="translate(2043.5,207.40) scale(0.7406,1)"><tspan x="21.60" fill="#88bdea">resources</tspan><tspan x="45.91" fill="#e2e2e2">:</tspan></text>
<text transform="translate(2043.5,211.40) scale(0.7406,1)"><tspan x="27.00" fill="#88bdea">limits</tspan><tspan x="43.21" fill="#e2e2e2">:</tspan></text>
<text transform="translate(2043.5,215.40) scale(0.7406,1)"><tspan x="32.41" fill="#88bdea">memory</tspan><tspan x="48.61" fill="#e2e2e2">:</tspan><tspan x="54.01" fill="#e6a845">2Gi</tspan></text>
<text transform="translate(2043.5,219.40) scale(0.7406,1)"><tspan x="27.00" fill="#88bdea">requests</tspan><tspan x="48.61" fill="#e2e2e2">:</tspan></text>
<text transform="translate(2043.5,223.40) scale(0.7406,1)"><tspan x="32.41" fill="#88bdea">memory</tspan><tspan x="48.61" fill="#e2e2e2">:</tspan><tspan x="54.01" fill="#e6a845">2Gi</tspan></text>
<text transform="translate(2043.5,227.40) scale(0.7406,1)"><tspan x="16.20" fill="#88bdea">networks</tspan><tspan x="37.81" fill="#e2e2e2">:</tspan></text>
<text transform="translate(2043.5,231.40) scale(0.7406,1)"><tspan x="21.60" fill="#e2e2e2">–</tspan><tspan x="27.00" fill="#88bdea">name</tspan><tspan x="37.81" fill="#e2e2e2">:</tspan><tspan x="43.21" fill="#e6a845">default</tspan></text>
<text transform="translate(2043.5,235.40) scale(0.7406,1)"><tspan x="27.00" fill="#88bdea">pod</tspan><tspan x="35.11" fill="#e2e2e2">:</tspan><tspan x="40.51" fill="#d8d8d8">{}</tspan></text>
<text transform="translate(2043.5,239.40) scale(0.7406,1)"><tspan x="16.20" fill="#88bdea">volumes</tspan><tspan x="35.11" fill="#e2e2e2">:</tspan></text>
<text transform="translate(2043.5,243.40) scale(0.7406,1)"><tspan x="21.60" fill="#e2e2e2">–</tspan><tspan x="27.00" fill="#88bdea">dataVolume</tspan><tspan x="54.01" fill="#e2e2e2">:</tspan></text>
<text transform="translate(2043.5,247.40) scale(0.7406,1)"><tspan x="32.41" fill="#88bdea">name</tspan><tspan x="43.21" fill="#e2e2e2">:</tspan><tspan x="48.61" fill="#e6a845">vm-from-template-ubuntu-2204</tspan></text>
<text transform="translate(2043.5,251.40) scale(0.7406,1)"><tspan x="27.00" fill="#88bdea">name</tspan><tspan x="37.81" fill="#e2e2e2">:</tspan><tspan x="43.21" fill="#e6a845">datavolume-os</tspan></text>
<text transform="translate(2043.5,255.40) scale(0.7406,1)"><tspan x="21.60" fill="#e2e2e2">–</tspan><tspan x="27.00" fill="#88bdea">cloudInitNoCloud</tspan><tspan x="70.21" fill="#e2e2e2">:</tspan></text>
<text transform="translate(2043.5,259.40) scale(0.7406,1)"><tspan x="32.41" fill="#88bdea">userData</tspan><tspan x="54.01" fill="#e2e2e2">:</tspan><tspan x="59.41" fill="#e6a845">|</tspan></text>
<text transform="translate(2043.5,263.40) scale(0.7406,1)"><tspan x="37.81" fill="#e6a845">#cloud-config</tspan></text>
<text transform="translate(2043.5,267.40) scale(0.7406,1)"><tspan x="37.81" fill="#e6a845">ssh_pwauth: True</tspan></text>
<text transform="translate(2043.5,271.40) scale(0.7406,1)"><tspan x="37.81" fill="#e6a845">chpasswd: { expire: False }</tspan></text>
<text transform="translate(2043.5,275.40) scale(0.7406,1)"><tspan x="37.81" fill="#e6a845">password: spectro</tspan></text>
<text transform="translate(2043.5,279.40) scale(0.7406,1)"><tspan x="37.81" fill="#e6a845">disable_root: false</tspan></text>
<text transform="translate(2043.5,283.40) scale(0.7406,1)"><tspan x="37.81" fill="#e6a845">runcmd:</tspan></text>
<text transform="translate(2043.5,287.40) scale(0.7406,1)"><tspan x="43.21" fill="#e2e2e2">–</tspan><tspan x="48.61" fill="#e6a845">apt-get update</tspan></text>
<text transform="translate(2043.5,291.40) scale(0.7406,1)"><tspan x="43.21" fill="#e2e2e2">–</tspan><tspan x="48.61" fill="#e6a845">apt-get install -y qemu-guest-agent</tspan></text>
<text transform="translate(2043.5,295.40) scale(0.7406,1)"><tspan x="43.21" fill="#e2e2e2">–</tspan><tspan x="48.61" fill="#e6a845">systemctl start qemu-guest-agent</tspan></text>
<text transform="translate(2043.5,299.40) scale(0.7406,1)"><tspan x="27.00" fill="#88bdea">name</tspan><tspan x="37.81" fill="#e2e2e2">:</tspan><tspan x="43.21" fill="#e6a845">cloudinitdisk</tspan></text>
<text transform="translate(2043.5,303.40) scale(0.7406,1)"><tspan x="5.40" fill="#88bdea">running</tspan><tspan x="24.30" fill="#e2e2e2">:</tspan><tspan x="29.70" fill="#e6a845">false</tspan></text>
</g>
</svg>
<text x="153" y="96" font-family="&quot;Liberation Sans&quot;, sans-serif" font-size="45" font-weight="700" fill="#ffffff" letter-spacing="2.164" xml:space="preserve">palette</text>
<text x="48" y="179" font-family="&quot;Liberation Sans&quot;, sans-serif" font-size="23.26" font-weight="400" fill="#b9bccb" letter-spacing="-1.195" xml:space="preserve">4.2.9</text>
<text x="119.3" y="295.9" font-family="&quot;Liberation Sans&quot;, sans-serif" font-size="28.63" font-weight="400" fill="#c6c5dc" letter-spacing="1.156" stroke="#c6c5dc" stroke-width="0.4" xml:space="preserve">Project Overview</text>
<text x="119.3" y="423.9" font-family="&quot;Liberation Sans&quot;, sans-serif" font-size="28.63" font-weight="400" fill="#c6c5dc" letter-spacing="0.595" stroke="#c6c5dc" stroke-width="0.4" xml:space="preserve">Profiles</text>
<text x="120.3" y="551.9" font-family="&quot;Liberation Sans&quot;, sans-serif" font-size="28.63" font-weight="400" fill="#ffffff" letter-spacing="1.076" stroke="#ffffff" stroke-width="0.4" xml:space="preserve">Clusters</text>
<text x="120.3" y="679.9" font-family="&quot;Liberation Sans&quot;, sans-serif" font-size="28.63" font-weight="400" fill="#c6c5dc" letter-spacing="1.094" stroke="#c6c5dc" stroke-width="0.4" xml:space="preserve">Cluster Groups</text>
<text x="121.3" y="807.9" font-family="&quot;Liberation Sans&quot;, sans-serif" font-size="28.63" font-weight="400" fill="#c6c5dc" letter-spacing="1.417" stroke="#c6c5dc" stroke-width="0.4" xml:space="preserve">Workspaces</text>
<text x="121.3" y="935.9" font-family="&quot;Liberation Sans&quot;, sans-serif" font-size="28.63" font-weight="400" fill="#c6c5dc" letter-spacing="0.627" stroke="#c6c5dc" stroke-width="0.4" xml:space="preserve">Audit Logs</text>
<text x="119.3" y="1063.9" font-family="&quot;Liberation Sans&quot;, sans-serif" font-size="28.63" font-weight="400" fill="#c6c5dc" letter-spacing="1.063" stroke="#c6c5dc" stroke-width="0.4" xml:space="preserve">Project Settings</text>
<text x="120.3" y="1760" font-family="&quot;Liberation Sans&quot;, sans-serif" font-size="28.63" font-weight="400" fill="#c6c5dc" letter-spacing="1.292" stroke="#c6c5dc" stroke-width="0.4" xml:space="preserve">Tenant Settings</text>
<text x="37.3" y="1863.9" font-family="&quot;Liberation Sans&quot;, sans-serif" font-size="24.85" font-weight="400" fill="#c8cadb" letter-spacing="2.008" stroke="#c8cadb" stroke-width="0.35" xml:space="preserve">Start small and only pay</text>
<text x="83.4" y="1899.5" font-family="&quot;Liberation Sans&quot;, sans-serif" font-size="24.7" font-weight="400" fill="#c8cadb" letter-spacing="2.072" stroke="#c8cadb" stroke-width="0.35" xml:space="preserve">for what you use!</text>
<text x="114.4" y="1981.7" font-family="&quot;Liberation Sans&quot;, sans-serif" font-size="28.49" font-weight="400" fill="#2c5d4a" letter-spacing="2.464" stroke="#2c5d4a" stroke-width="0.5" xml:space="preserve">Upgrade now</text>
<text x="109.6" y="2087.7" font-family="&quot;Liberation Sans&quot;, sans-serif" font-size="24" font-weight="400" fill="#a3a5b6" letter-spacing="0.117" xml:space="preserve">spectro cloud</text>
<text x="566.9" y="57.8" font-family="&quot;Liberation Sans&quot;, sans-serif" font-size="29.07" font-weight="400" fill="#5d6472" letter-spacing="1.415" stroke="#5d6472" stroke-width="0.4" xml:space="preserve">Default</text>
<text x="1034.3" y="56.6" font-family="&quot;Liberation Sans&quot;, sans-serif" font-size="26.31" font-weight="400" fill="#4a86be" letter-spacing="0.015" xml:space="preserve">Clusters</text>
<text x="1173.7" y="57.9" font-family="&quot;Liberation Sans&quot;, sans-serif" font-size="32.8" font-weight="400" fill="#566073" letter-spacing="3.128" stroke="#566073" stroke-width="1.0" xml:space="preserve">vmo-templates-guide</text>
<text x="2402" y="55.9" font-family="&quot;Liberation Sans&quot;, sans-serif" font-size="21.08" font-weight="400" fill="#80848d" letter-spacing="0.519" xml:space="preserve">0.55/100kCh</text>
<text x="2804.9" y="57.7" font-family="&quot;Liberation Sans&quot;, sans-serif" font-size="28.34" font-weight="400" fill="#2f86c8" letter-spacing="1.408" stroke="#2f86c8" stroke-width="0.45" xml:space="preserve">Docs</text>
<text x="489.2" y="160.2" font-family="&quot;Liberation Sans&quot;, sans-serif" font-size="29.07" font-weight="400" fill="#7d828f" letter-spacing="1.367" stroke="#7d828f" stroke-width="0.55" xml:space="preserve">Overview</text>
<text x="684.6" y="160.2" font-family="&quot;Liberation Sans&quot;, sans-serif" font-size="29.07" font-weight="400" fill="#7d828f" letter-spacing="0.575" stroke="#7d828f" stroke-width="0.55" xml:space="preserve">Usage &amp; Costs</text>
<text x="949.4" y="160.2" font-family="&quot;Liberation Sans&quot;, sans-serif" font-size="29.07" font-weight="400" fill="#7d828f" letter-spacing="0.914" stroke="#7d828f" stroke-width="0.55" xml:space="preserve">Profile</text>
<text x="1101.7" y="160.2" font-family="&quot;Liberation Sans&quot;, sans-serif" font-size="29.07" font-weight="400" fill="#7d828f" letter-spacing="1.422" stroke="#7d828f" stroke-width="0.55" xml:space="preserve">Workloads</text>
<text x="1315" y="160.2" font-family="&quot;Liberation Sans&quot;, sans-serif" font-size="29.07" font-weight="700" fill="#1f64b6" letter-spacing="0.249" xml:space="preserve">Virtual Machines</text>
<text x="1611.9" y="160.2" font-family="&quot;Liberation Sans&quot;, sans-serif" font-size="29.07" font-weight="400" fill="#7d828f" letter-spacing="1.656" stroke="#7d828f" stroke-width="0.55" xml:space="preserve">Nodes</text>
<text x="1765.8" y="160.2" font-family="&quot;Liberation Sans&quot;, sans-serif" font-size="29.07" font-weight="400" fill="#7d828f" letter-spacing="0.657" stroke="#7d828f" stroke-width="0.55" xml:space="preserve">Events</text>
<text x="1922.7" y="160.2" font-family="&quot;Liberation Sans&quot;, sans-serif" font-size="29.07" font-weight="400" fill="#7d828f" letter-spacing="1.54" stroke="#7d828f" stroke-width="0.55" xml:space="preserve">Scan</text>
<text x="2056" y="160.2" font-family="&quot;Liberation Sans&quot;, sans-serif" font-size="29.07" font-weight="400" fill="#7d828f" letter-spacing="1.611" stroke="#7d828f" stroke-width="0.55" xml:space="preserve">Backups</text>
<text x="2973" y="160" font-family="&quot;Liberation Sans&quot;, sans-serif" font-size="28.78" font-weight="400" fill="#3b3e47" letter-spacing="1.749" xml:space="preserve">Settings</text>
<text x="473.9" y="257.6" font-family="&quot;Liberation Sans&quot;, sans-serif" font-size="32.56" font-weight="400" fill="#40444f" letter-spacing="1.986" xml:space="preserve">Namespace: default</text>
<text x="472.4" y="377.7" font-family="&quot;Liberation Sans&quot;, sans-serif" font-size="49.56" font-weight="400" fill="#4b5262" letter-spacing="1.966" xml:space="preserve">New Virtual Machine</text>
<text x="487.75" y="515.9" font-family="&quot;Liberation Sans&quot;, sans-serif" font-size="26.89" font-weight="400" fill="#4f5361" letter-spacing="0" xml:space="preserve">1</text>
<text x="537.6" y="516" font-family="&quot;Liberation Sans&quot;, sans-serif" font-size="32.99" font-weight="400" fill="#4b5063" letter-spacing="0.854" xml:space="preserve">Basic VM settings</text>
<text x="489.7" y="596" font-family="&quot;Liberation Sans&quot;, sans-serif" font-size="25.73" font-weight="400" fill="#ffffff" letter-spacing="0" xml:space="preserve">2</text>
<text x="538.1" y="595.6" font-family="&quot;Liberation Sans&quot;, sans-serif" font-size="32.41" font-weight="400" fill="#2563a8" letter-spacing="1.893" xml:space="preserve">Customize</text>
<text x="538.1" y="643.9" font-family="&quot;Liberation Sans&quot;, sans-serif" font-size="32.6" font-weight="400" fill="#2563a8" letter-spacing="2.481" xml:space="preserve">configuration</text>
<text x="490.85" y="724" font-family="&quot;Liberation Sans&quot;, sans-serif" font-size="25.58" font-weight="400" fill="#4f5361" letter-spacing="0" xml:space="preserve">3</text>
<text x="537.5" y="723.8" font-family="&quot;Liberation Sans&quot;, sans-serif" font-size="32.7" font-weight="400" fill="#4b5063" letter-spacing="0.686" xml:space="preserve">Review</text>
<text x="1005.4" y="2044.1" font-family="&quot;Liberation Sans&quot;, sans-serif" font-size="28.92" font-weight="400" fill="#ffffff" letter-spacing="0.598" stroke="#ffffff" stroke-width="0.6" xml:space="preserve">Next</text>
<text x="1163" y="2044.1" font-family="&quot;Liberation Sans&quot;, sans-serif" font-size="29.8" font-weight="400" fill="#1f5c9e" letter-spacing="0.219" stroke="#1f5c9e" stroke-width="0.6" xml:space="preserve">Back</text>
<text x="1326.8" y="2044.1" font-family="&quot;Liberation Sans&quot;, sans-serif" font-size="29.8" font-weight="400" fill="#2a64a6" letter-spacing="1.354" stroke="#2a64a6" stroke-width="0.6" xml:space="preserve">Cancel</text>
<rect x="0" y="0" width="32" height="8" fill="#000"/>
<rect x="0" y="8" width="16" height="8" fill="#000"/>
<rect x="0" y="16" width="8" height="16" fill="#000"/>
<rect x="0" y="32" width="2" height="16" fill="#000"/>
<rect x="3200" y="0" width="30" height="8" fill="#000"/>
<rect x="3216" y="8" width="14" height="16" fill="#000"/>
<rect x="3224" y="24" width="6" height="8" fill="#000"/>
<rect x="3224" y="2096" width="6" height="16" fill="#000"/>
<rect x="3216" y="2112" width="14" height="8" fill="#000"/>
<rect x="3200" y="2120" width="30" height="8" fill="#000"/>
<rect x="3184" y="2128" width="46" height="2" fill="#000"/>
<rect x="0" y="2080" width="2" height="16" fill="#000"/>
<rect x="0" y="2096" width="8" height="16" fill="#000"/>
<rect x="0" y="2112" width="16" height="8" fill="#000"/>
<rect x="0" y="2120" width="24" height="8" fill="#000"/>
<rect x="0" y="2128" width="48" height="2" fill="#000"/>
</svg>
</div></body></html>
